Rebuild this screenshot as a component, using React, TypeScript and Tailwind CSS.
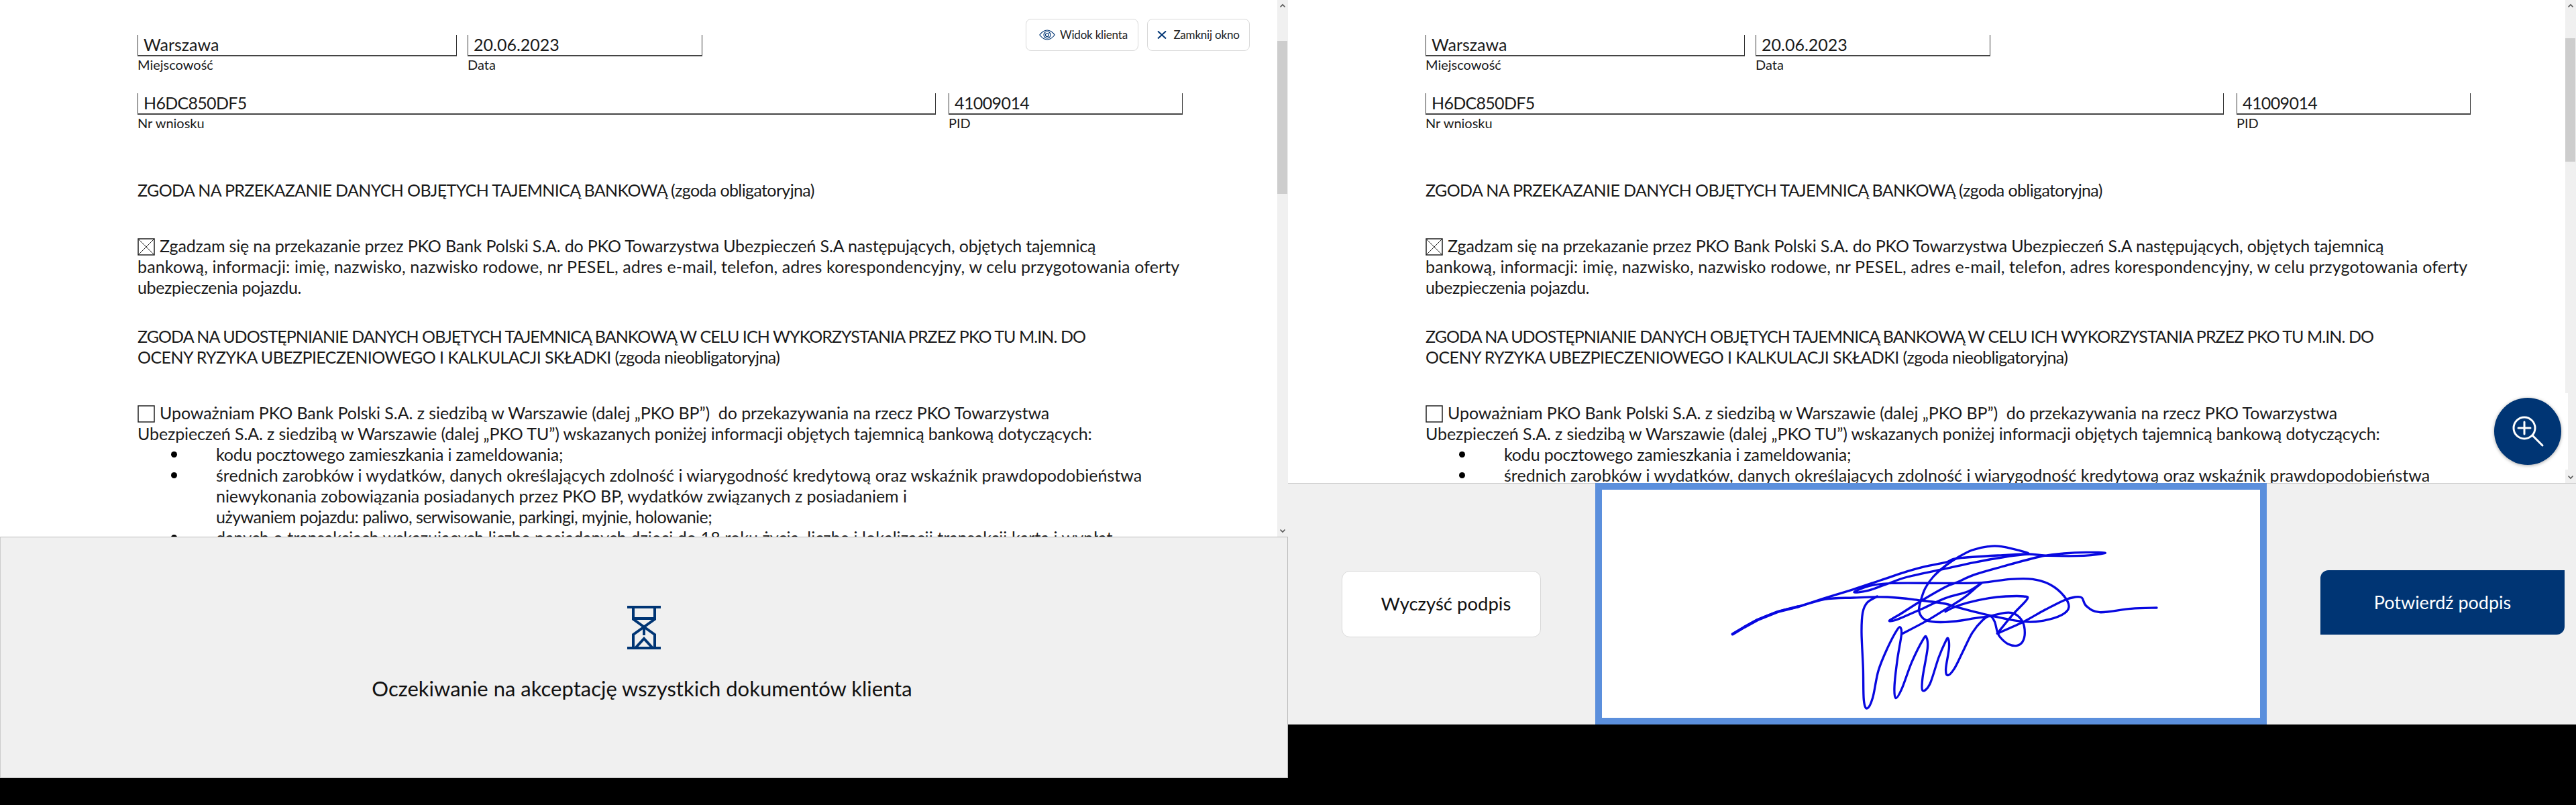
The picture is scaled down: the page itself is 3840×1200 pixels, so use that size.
import React from 'react';

// signature strokes, traced from the reference (3 units = 1px)
const STROKES: number[][][] = [
  [[38,406],[90,375],[150,342],[240,306],[330,283],[450,245],[580,205],[700,165],[820,125],[900,103],[990,85],[1050,66],[1260,52],[1360,48],[1450,55],[1610,55],[1705,43],[1620,40],[1520,45],[1410,60],[1240,105],[1120,140],[1040,175],[990,195],[880,258],[790,315],[740,345],[760,345],[800,330],[880,295],[990,245],[1090,215],[1150,178],[1130,195],[1070,245],[990,295],[900,350],[795,405]],
  [[685,237],[640,265],[620,310],[615,400],[622,560],[625,700],[640,738],[665,690],[690,570],[730,470],[775,385],[790,378],[793,410],[775,520],[762,640],[768,692],[795,650],[840,530],[890,430],[905,420],[910,470],[888,600],[888,658],[920,630],[960,510],[990,440],[1002,425],[1006,470],[992,560],[1000,590],[1030,560],[1070,480],[1110,400],[1155,345],[1190,325],[1210,350],[1222,395],[1235,420],[1270,450],[1310,457],[1335,440],[1345,400],[1335,350],[1300,315],[1260,310],[1190,325],[1120,335],[1060,345],[990,352],[930,350],[890,335],[872,300],[880,255],[900,200],[935,150],[990,100],[1050,60],[1110,30],[1180,14],[1240,14],[1350,40],[1360,48]],
  [[1360,48],[1260,60],[1120,85],[990,113],[820,150],[720,185],[640,212],[582,218],[650,190],[750,178],[990,178],[1150,176],[1280,160],[1380,160],[1460,185],[1520,235],[1542,285],[1510,320],[1420,347],[1340,350],[1200,325],[1040,285],[990,270],[880,255],[730,240],[580,243],[450,250],[330,285]],
  [[1222,403],[1290,320],[1355,250],[1340,237],[1260,237],[1185,245],[1090,265],[1030,285],[990,305]],
  [[1222,403],[1340,350],[1430,300],[1520,255],[1570,240],[1600,243],[1620,280],[1680,308],[1820,292],[1935,288]],
];

const toPath = (pts: number[][]): string => {
  let d = `M${pts[0][0]} ${pts[0][1]}`;
  for (let i = 0; i < pts.length - 1; i++) {
    const p0 = pts[Math.max(i - 1, 0)];
    const p1 = pts[i];
    const p2 = pts[i + 1];
    const p3 = pts[Math.min(i + 2, pts.length - 1)];
    const c1x = p1[0] + (p2[0] - p0[0]) / 6;
    const c1y = p1[1] + (p2[1] - p0[1]) / 6;
    const c2x = p2[0] - (p3[0] - p1[0]) / 6;
    const c2y = p2[1] - (p3[1] - p1[1]) / 6;
    d += ` C${c1x} ${c1y} ${c2x} ${c2y} ${p2[0]} ${p2[1]}`;
  }
  return d;
};

const Field: React.FC<{ value: string; label: string; className: string; valueClass?: string }> = ({ value, label, className, valueClass }) => (
  <div className={className}>
    <div className={`h-[32px] border-x border-b-2 border-x-[#333] border-b-[#444] pl-[8px] text-[25px] leading-[28px] ${valueClass ?? ''}`}>{value}</div>
    <div className="h-[26px] text-[20px] leading-[24px]">{label}</div>
  </div>
);

const Checkbox: React.FC<{ checked?: boolean }> = ({ checked }) => (
  <svg viewBox="0 0 26 26" className="mr-[7px] inline-block h-[26px] w-[26px] align-[-5px]">
    <rect x="1" y="1" width="24" height="24" fill="none" stroke="#222" strokeWidth="1.5" />
    {checked && <path d="M1 1L25 25M25 1L1 25" stroke="#222" strokeWidth="1" />}
  </svg>
);

const Bullet: React.FC<{ children: React.ReactNode }> = ({ children }) => (
  <div className="relative pl-[117px]">
    <span className="absolute left-[50px] top-[11px] h-[9px] w-[9px] rounded-full bg-black" />
    {children}
  </div>
);

const Document: React.FC = () => (
  <div className="min-w-0 flex-1 overflow-hidden whitespace-nowrap bg-white pl-[205px] pt-[52px] text-[25px] leading-[31px] text-[#1a1a1a]">
    <div className="flex gap-[16px]">
      <Field value="Warszawa" label="Miejscowość" className="w-[476px]" />
      <Field value="20.06.2023" label="Data" className="w-[350px]" />
    </div>
    <div className="mt-[29px] flex gap-[19px]">
      <Field value="H6DC850DF5" label="Nr wniosku" className="w-[1190px]" valueClass="tracking-[-0.7px]" />
      <Field value="41009014" label="PID" className="w-[349px]" valueClass="tracking-[-0.6px]" />
    </div>
    <p className="mt-[71px] tracking-[-0.62px]">ZGODA NA PRZEKAZANIE DANYCH OBJĘTYCH TAJEMNICĄ BANKOWĄ (zgoda obligatoryjna)</p>
    <div className="mt-[52px]">
      <div className="tracking-[-0.16px]">
        <Checkbox checked />
        Zgadzam się na przekazanie przez PKO Bank Polski S.A. do PKO Towarzystwa Ubezpieczeń S.A następujących, objętych tajemnicą
      </div>
      <div className="tracking-[0.13px]">bankową, informacji: imię, nazwisko, nazwisko rodowe, nr PESEL, adres e-mail, telefon, adres korespondencyjny, w celu przygotowania oferty</div>
      <div className="tracking-[-0.37px]">ubezpieczenia pojazdu.</div>
    </div>
    <div className="mt-[42px]">
      <div className="tracking-[-0.93px]">ZGODA NA UDOSTĘPNIANIE DANYCH OBJĘTYCH TAJEMNICĄ BANKOWĄ W CELU ICH WYKORZYSTANIA PRZEZ PKO TU M.IN. DO</div>
      <div className="tracking-[-0.59px]">OCENY RYZYKA UBEZPIECZENIOWEGO I KALKULACJI SKŁADKI (zgoda nieobligatoryjna)</div>
    </div>
    <div className="mt-[52px]">
      <div className="tracking-[-0.07px]">
        <Checkbox />
        Upoważniam PKO Bank Polski S.A. z siedzibą w Warszawie (dalej „PKO BP”)&nbsp; do przekazywania na rzecz PKO Towarzystwa
      </div>
      <div className="tracking-[-0.12px]">Ubezpieczeń S.A. z siedzibą w Warszawie (dalej „PKO TU”) wskazanych poniżej informacji objętych tajemnicą bankową dotyczących:</div>
      <Bullet>
        <div className="tracking-[-0.17px]">kodu pocztowego zamieszkania i zameldowania;</div>
      </Bullet>
      <Bullet>
        <div className="tracking-[0.03px]">średnich zarobków i wydatków, danych określających zdolność i wiarygodność kredytową oraz wskaźnik prawdopodobieństwa</div>
        <div className="tracking-[-0.04px]">niewykonania zobowiązania posiadanych przez PKO BP, wydatków związanych z posiadaniem i</div>
        <div className="tracking-[-0.54px]">używaniem pojazdu: paliwo, serwisowanie, parkingi, myjnie, holowanie;</div>
      </Bullet>
      <Bullet>
        <div className="tracking-[0.08px]">danych o transakcjach wskazujących liczbę posiadanych dzieci do 18 roku życia, liczbę i lokalizacji transakcji kartą i wypłat</div>
      </Bullet>
    </div>
  </div>
);

const Scrollbar: React.FC<{ thumb: string }> = ({ thumb }) => (
  <div className="flex w-[16px] shrink-0 flex-col bg-[#f0f0f0]">
    <svg viewBox="0 0 16 16" className="h-[16px] w-[16px]">
      <path d="M4.5 10.5L8 7L11.5 10.5" fill="none" stroke="#555" strokeWidth="1.6" />
    </svg>
    <div className={`w-[15px] bg-[#cdcdcd] ${thumb}`} />
    <svg viewBox="0 0 16 16" className="mt-auto h-[16px] w-[16px]">
      <path d="M4.5 5.5L8 9L11.5 5.5" fill="none" stroke="#555" strokeWidth="1.6" />
    </svg>
  </div>
);

const Hourglass: React.FC = () => (
  <svg viewBox="0 0 50 65" className="h-[65px] w-[50px]" fill="none" stroke="#003574" strokeWidth="4">
    <path d="M0 2H50M0 63H50" />
    <path d="M9 3V20L41 43V62M41 3V20L9 43V62M9 19H41M25 32V44M13 62L25 49L37 62" />
  </svg>
);

const App: React.FC = () => (
  <div className="flex h-[1200px] w-[3840px] items-start overflow-hidden bg-black [font-family:Lato,sans-serif]">
    {/* agent side */}
    <div className="relative flex h-[1160px] w-[1920px] flex-col">
      <div className="flex min-h-0 flex-1">
        <Document />
        <Scrollbar thumb="mt-[45px] h-[228px]" />
      </div>
      <div className="absolute right-[57px] top-[28px] flex gap-[13px] text-[17px] tracking-[-0.2px] text-[#222]">
        <button className="flex h-[48px] w-[168px] items-center justify-center gap-[7px] rounded-[8px] border border-[#d8d8d8] bg-white pl-[4px]">
          <svg viewBox="0 0 24 16" className="h-[16px] w-[24px]" fill="none" stroke="#003574" strokeWidth="1.2">
            <path d="M0.8 8C5 2.5 8.5 1 12 1s7 1.5 11.2 7C19 13.5 15.5 15 12 15S5 13.5 0.8 8Z" />
            <circle cx="12" cy="8" r="5" />
            <circle cx="12" cy="8" r="2.5" />
          </svg>
          Widok klienta
        </button>
        <button className="flex h-[48px] w-[153px] items-center justify-center gap-[10px] rounded-[8px] border border-[#d8d8d8] bg-white">
          <svg viewBox="0 0 14 12" className="h-[12px] w-[14px]" fill="none" stroke="#003574" strokeWidth="2">
            <path d="M1 0.5L13 11.5M13 0.5L1 11.5" />
          </svg>
          Zamknij okno
        </button>
      </div>
      <div className="flex h-[360px] shrink-0 flex-col items-center border border-t-[#bbb] border-r-[#bbb] border-b-[#bbb] border-l-[#ccc] bg-[#f0f0f0] pt-[102px]">
        <Hourglass />
        <div className="mr-[6px] mt-[40px] text-[31px] leading-[36px] text-[#111]">Oczekiwanie na akceptację wszystkich dokumentów klienta</div>
      </div>
    </div>

    {/* client side */}
    <div className="relative flex h-[1080px] w-[1920px] flex-col">
      <div className="flex min-h-0 flex-1">
        <Document />
        <Scrollbar thumb="mt-[41px] h-[184px]" />
      </div>
      <div className="absolute right-[12px] top-[586px] flex h-[114px] w-[120px] items-center justify-center bg-white">
        <button className="flex h-[100px] w-[100px] items-center justify-center rounded-full bg-[#003574] shadow-[0_1px_5px_rgba(0,0,0,0.35)]">
          <svg viewBox="0 0 50 50" className="h-[50px] w-[50px]" fill="none" stroke="#fff" strokeLinecap="round">
            <circle cx="20" cy="20" r="16" strokeWidth="3" />
            <path d="M20 11V29M11 20H29" strokeWidth="3" />
            <path d="M32 31L47 46" strokeWidth="3" />
          </svg>
        </button>
      </div>
      <div className="flex h-[360px] shrink-0 items-center bg-[#f0f0f0] pl-[80px] text-[27px] shadow-[inset_0_1px_0_#ccc]">
        <button className="h-[99px] w-[297px] rounded-[12px] border border-[#d8d8d8] bg-white pl-[14px] text-[27.5px] text-[#111]">Wyczyść podpis</button>
        <div className="ml-[81px] h-[360px] w-[1001px] border-[10px] border-[#5b8fdc] bg-white">
          <svg viewBox="-546 -240 2943 1020" className="h-full w-full" fill="none" stroke="#0808e0" strokeWidth="10" strokeLinejoin="round" strokeLinecap="round">
            {STROKES.map((s, i) => (
              <path key={i} d={toPath(s)} />
            ))}
            <path d="M38 406L90 375L150 342L240 306L330 283" strokeWidth="13" />
          </svg>
        </div>
        <button className="mb-[4px] ml-[80px] h-[96px] w-[364px] rounded-tl-[12px] rounded-br-[12px] bg-[#003574] text-white">Potwierdź podpis</button>
      </div>
    </div>
  </div>
);

export default App;
